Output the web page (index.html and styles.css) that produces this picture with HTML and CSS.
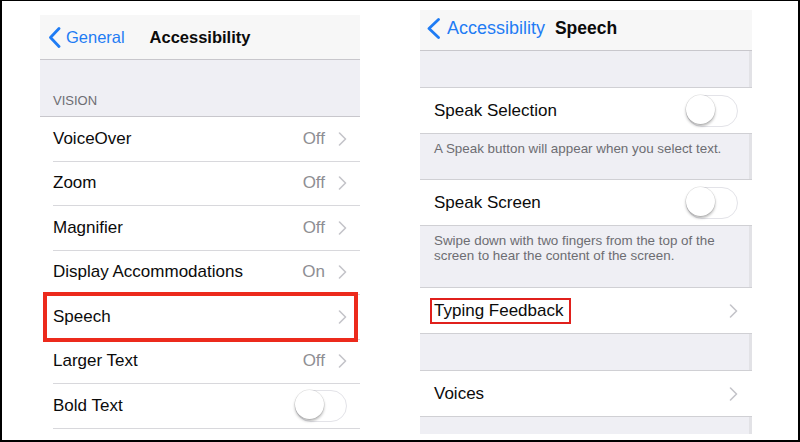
FILE: index.html
```html
<!doctype html>
<html lang="en">
<head>
  <meta charset="UTF-8">
  <meta name="viewport" content="width=device-width, initial-scale=1">
  <title>Accessibility - Speech</title>
  <link rel="stylesheet" href="styles.css">
</head>
<body>
  <div class="frame">

    <!-- 左边：Accessibility -->
    <section class="panel panel-left">
      <header class="navbar">
        <div class="back">
          <svg class="back-icon" width="13" height="21" viewBox="0 0 13 21"><polyline points="11,1.5 2.5,10.5 11,19.5" /></svg>
          <span>General</span>
        </div>
        <div class="title">Accessibility</div>
        <div></div>
      </header>
      <div class="group-head">VISION</div>
      <ul class="list">
        <li class="row"><span class="label">VoiceOver</span><span class="value">Off</span><svg class="chev" width="9" height="14" viewBox="0 0 9 14"><polyline points="1.5,1 7.5,7 1.5,13" /></svg></li>
        <li class="row"><span class="label">Zoom</span><span class="value">Off</span><svg class="chev" width="9" height="14" viewBox="0 0 9 14"><polyline points="1.5,1 7.5,7 1.5,13" /></svg></li>
        <li class="row"><span class="label">Magnifier</span><span class="value">Off</span><svg class="chev" width="9" height="14" viewBox="0 0 9 14"><polyline points="1.5,1 7.5,7 1.5,13" /></svg></li>
        <li class="row"><span class="label">Display Accommodations</span><span class="value">On</span><svg class="chev" width="9" height="14" viewBox="0 0 9 14"><polyline points="1.5,1 7.5,7 1.5,13" /></svg></li>
        <li class="row row-marked"><span class="label">Speech</span><svg class="chev" width="9" height="14" viewBox="0 0 9 14"><polyline points="1.5,1 7.5,7 1.5,13" /></svg></li>
        <li class="row"><span class="label">Larger Text</span><span class="value">Off</span><svg class="chev" width="9" height="14" viewBox="0 0 9 14"><polyline points="1.5,1 7.5,7 1.5,13" /></svg></li>
        <li class="row"><span class="label">Bold Text</span><span class="switch"></span></li>
      </ul>
    </section>

    <!-- 右边：Speech -->
    <section class="panel panel-right">
      <header class="navbar">
        <div class="back">
          <svg class="back-icon" width="15" height="21" viewBox="0 0 15 21"><polyline points="12.5,1.5 3,10.5 12.5,19.5" /></svg>
          <span>Accessibility</span>
        </div>
        <div class="title">Speech</div>
        <div></div>
      </header>
      <div class="gap gap-top"></div>
      <div class="cell"><span class="label">Speak Selection</span><span class="switch"></span></div>
      <div class="note note-one">A Speak button will appear when you select text.</div>
      <div class="cell"><span class="label">Speak Screen</span><span class="switch"></span></div>
      <div class="note note-two">Swipe down with two fingers from the top of the<br>screen to hear the content of the screen.</div>
      <div class="cell"><span class="label"><span class="marked">Typing Feedback</span></span><svg class="chev" width="9" height="14" viewBox="0 0 9 14"><polyline points="1.5,1 7.5,7 1.5,13" /></svg></div>
      <div class="gap gap-mid"></div>
      <div class="cell"><span class="label">Voices</span><svg class="chev" width="9" height="14" viewBox="0 0 9 14"><polyline points="1.5,1 7.5,7 1.5,13" /></svg></div>
      <div class="gap gap-end"></div>
    </section>

  </div>
</body>
</html>
```
FILE: styles.css
```css
* {
  box-sizing: border-box;
}
body {
  margin: 0;
  font-family: "Liberation Sans", Arial, sans-serif;
  color: #0b0b0b;
}
.frame {
  width: 800px;
  height: 442px;
  overflow: hidden;
  background: #fff;
  border: 2px solid #000;
  border-top-width: 1px;
  display: flex;
  align-items: flex-start;
}

/* 两个手机截图面板 */
.panel {
  background: #fff;
}
.panel-left {
  width: 320px;
  margin: 14px 0 0 38px;
}
.panel-right {
  width: 332px;
  margin: 9px 0 0 60px;
}

.navbar {
  display: grid;
  grid-template-columns: 1fr auto 1fr;
  align-items: center;
  background: #f7f7f7;
  border-bottom: 1px solid #c8c7cc;
}
.panel-left .navbar {
  height: 45px;
  font-size: 16.5px;
  padding-top: 1px;
}
.panel-right .navbar {
  height: 41px;
  font-size: 18px;
  padding-bottom: 4px;
}
.back {
  display: flex;
  align-items: center;
  color: #1f7cf4;
}
.panel-left .back {
  padding-left: 8px;
  gap: 5px;
}
.panel-right .back {
  padding-left: 6px;
  gap: 6px;
}
.back-icon polyline {
  fill: none;
  stroke: #1f7cf4;
  stroke-width: 2.8;
  stroke-linecap: round;
  stroke-linejoin: round;
}
.title {
  font-weight: bold;
}
.panel-right .title {
  font-size: 17.5px;
}

.group-head {
  height: 57px;
  background: #efeff4;
  border-bottom: 1px solid #c8c7cc;
  display: flex;
  align-items: flex-end;
  padding: 0 0 8px 13px;
  font-size: 13px;
  color: #6d6d72;
}

.list {
  list-style: none;
  margin: 0;
  padding: 0 0 0 13px;
}
.row,
.cell {
  display: flex;
  align-items: center;
  font-size: 17px;
  background: #fff;
}
.row {
  height: 44.5px;
  border-bottom: 1px solid #d8d8dc;
  padding-right: 13px;
}
.cell {
  height: 46px;
  border-bottom: 1px solid #d0d0d4;
  padding: 0 14px 0 14px;
}
.label {
  flex: 1;
}
.value {
  color: #8e8e93;
  margin-right: 13px;
}
.chev polyline {
  fill: none;
  stroke: #c4c4c9;
  stroke-width: 1.6;
  stroke-linecap: round;
  stroke-linejoin: round;
}

/* 红框标记 */
.row-marked {
  position: relative;
}
.row-marked::after {
  content: "";
  position: absolute;
  top: -3px;
  bottom: -3px;
  left: -10px;
  right: 2px;
  border: 4px solid #ec2a1c;
}
.marked {
  display: inline-block;
  border: 2px solid #e0201c;
  padding: 0 6px 0 2px;
  margin-left: -4px;
  line-height: 22px;
}

/* 开关（关闭状态） */
.switch {
  position: relative;
  width: 52px;
  height: 32px;
  border-radius: 16px;
  border: 1.5px solid #e3e3e8;
  background: #fff;
}
.switch::before {
  content: "";
  position: absolute;
  top: -0.5px;
  left: -1px;
  width: 29px;
  height: 29px;
  border-radius: 50%;
  background: #fff;
  box-shadow: 0 2px 3px rgba(0, 0, 0, 0.3), 0 0 0 0.5px rgba(0, 0, 0, 0.12);
}

/* 右边的灰色分组与说明 */
.gap,
.note {
  background: #efeff4;
  border-bottom: 1px solid #d0d0d4;
  box-shadow: inset -3px 0 0 #e2e2e6;
}
.gap-top {
  height: 37px;
}
.gap-mid {
  height: 37px;
}
.gap-end {
  height: 17px;
  border-bottom: none;
}
.note {
  font-size: 13.4px;
  line-height: 15px;
  color: #6d6d72;
  padding: 7px 14px 0 14px;
}
.note-one {
  height: 46px;
}
.note-two {
  height: 62px;
}
```
